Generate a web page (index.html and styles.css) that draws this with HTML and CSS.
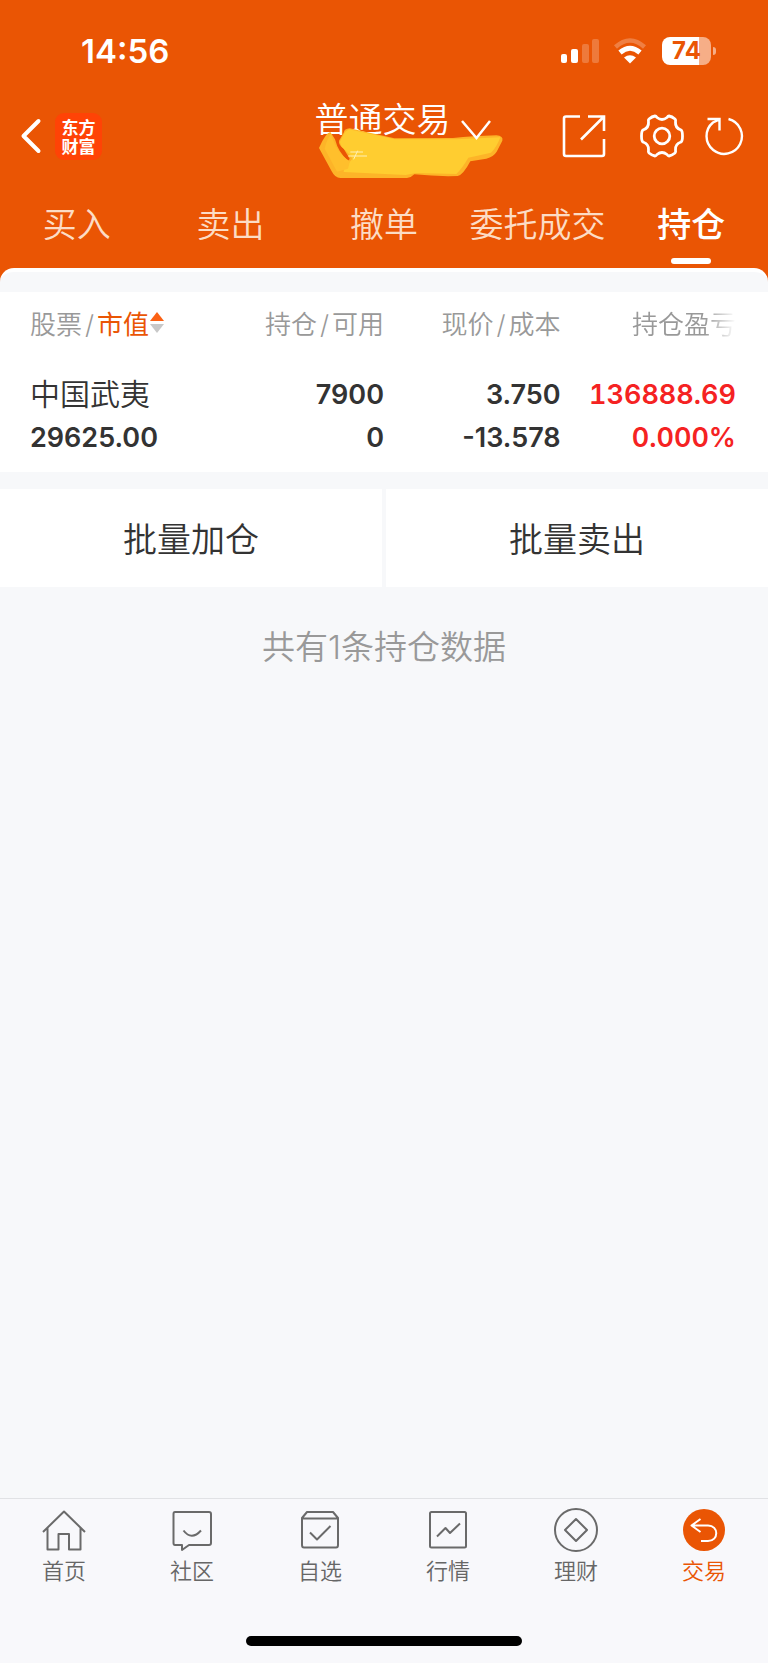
FILE: index.html
```html
<!DOCTYPE html>
<html lang="zh-CN">
<head>
<meta charset="utf-8">
<meta name="viewport" content="width=device-width, initial-scale=1">
<title>普通交易 - 持仓</title>
<link rel="stylesheet" href="styles.css">
</head>
<body>
<div class="app">
  <header class="top">
    <div class="status">
      <time class="clock">14:56</time>
      <div class="status-icons">
        <svg class="signal" width="38" height="26" viewBox="0 0 38 26" fill="#fff" aria-hidden="true">
          <rect x="0" y="16" width="6" height="9" rx="2"/>
          <rect x="10" y="11" width="7" height="14" rx="2"/>
          <rect x="21" y="6" width="7" height="19" rx="2" opacity=".22"/>
          <rect x="31" y="1" width="7" height="24" rx="2" opacity=".22"/>
        </svg>
        <svg class="wifi" width="34" height="26" viewBox="0 0 34 26" aria-hidden="true">
          <path d="M2.500 9Q17-4 31.500 9" fill="none" stroke="#fff" stroke-width="4.500" opacity=".25"/>
          <path d="M7 14.500Q17 6 27 14.500" fill="none" stroke="#fff" stroke-width="5"/>
          <path d="M11 19.500Q17 15 23 19.500L17 25.500Z" fill="#fff"/>
        </svg>
        <div class="battery"><span class="battery-level">74</span></div>
      </div>
    </div>
    <nav class="nav" aria-label="页面导航">
      <div class="nav-left">
        <button class="icon-btn" aria-label="返回">
          <svg width="20" height="36" viewBox="0 0 20 36" fill="none" stroke="#fff" stroke-width="4" stroke-linecap="round" stroke-linejoin="round"><path d="M17.500 3L2.500 18L17.500 33"/></svg>
        </button>
        <a class="logo" href="#">东方<br>财富</a>
      </div>
      <button class="title">
        <span>普通交易</span>
        <svg class="scribble" width="184" height="50" viewBox="58 146 552 150" aria-hidden="true">
          <path d="M92 158Q78 160 58 206L96 276Q106 296 122 296H322Q336 294 344 285Q410 292 474 290Q490 288 512 246L560 238Q582 232 591 217L608 184Q612 170 590 168Q520 170 460 176L284 177L150 147Q134 148 132 160L118 184Q116 196 132 208L150 238L146 245Q116 220 106 180Z" fill="#fdb428"/>
          <path d="M148 150L286 180L470 180L602 174Q590 206 574 220L506 235Q488 266 470 284L350 281L318 287L132 278Q132 266 152 246L158 238L150 226L126 202L120 188L136 158Z" fill="#ffcd30"/>
          <path d="M94 163Q78 188 75 208L112 277L145 268L151 246Q112 224 94 163Z" fill="#ffbf2c"/>
          <path d="M152 218H190M146 230H202M174 214L162 240" stroke="#fff0b5" stroke-width="3"/>
        </svg>
        <svg class="chevron" width="30" height="20" viewBox="0 0 30 20" fill="none" stroke="#fff" stroke-width="2.500"><path d="M1 1L15.500 18L29 1"/></svg>
      </button>
      <div class="nav-right">
        <button class="icon-btn" aria-label="分享">
          <svg width="44" height="44" viewBox="0 0 44 44" fill="none" stroke="#fff" stroke-width="2.600"><path d="M18 2.500H4Q2 2.500 2 4.500V40Q2 42 4 42H40Q42 42 42 40V25M26 2.500H42V17M41 3.500L19 25.500"/></svg>
        </button>
        <button class="icon-btn gear" aria-label="设置">
          <svg width="44" height="44" viewBox="0 0 44 44" fill="none" stroke="#fff" stroke-width="2.800" stroke-linejoin="round"><path d="M15 2Q16 2 17 3.500Q22 7.500 27 3.500Q28 2 29 2Q32 2.500 35 5Q36 6 35.500 8Q35 14 41 16Q42.500 17 42.500 22Q42.500 27 41 28Q35 30 35.500 36Q36 38 35 39Q32 41.500 29 42Q28 42 27 40.500Q22 36.500 17 40.500Q16 42 15 42Q12 41.500 9 39Q8 38 8.500 36Q9 30 3 28Q1.500 27 1.500 22Q1.500 17 3 16Q9 14 8.500 8Q8 6 9 5Q12 2.500 15 2Z"/><circle cx="22" cy="22" r="7.800"/></svg>
        </button>
        <button class="icon-btn" aria-label="刷新">
          <svg width="40" height="40" viewBox="0 0 40 40" fill="none" stroke="#fff" stroke-width="2.400"><path d="M24.500 3A17.700 17.700 0 1 1 9 6.500L15.500 3.500M3.500 3H15.500V14.500"/></svg>
        </button>
      </div>
    </nav>
    <nav class="tabs" aria-label="交易">
      <a class="tab" href="#">买入</a>
      <a class="tab" href="#">卖出</a>
      <a class="tab" href="#">撤单</a>
      <a class="tab" href="#">委托成交</a>
      <a class="tab tab-active" href="#" aria-current="page">持仓</a>
    </nav>
  </header>

  <main class="sheet">
    <table class="holdings">
      <thead>
        <tr>
          <th scope="col">股票<i>/</i><button class="sort">市值<svg width="14" height="22" viewBox="0 0 14 22" aria-hidden="true"><path d="M7 1L14 10H0Z" fill="#fb6114"/><path d="M0 13H14L7 22Z" fill="#c8c8c8"/></svg></button></th>
          <th scope="col">持仓<i>/</i>可用</th>
          <th scope="col">现价<i>/</i>成本</th>
          <th scope="col"><span class="faded">持仓盈亏</span></th>
        </tr>
      </thead>
      <tbody>
        <tr>
          <td><span class="name">中国武夷</span><span>29625.00</span></td>
          <td><span>7900</span><span>0</span></td>
          <td><span>3.750</span><span>-13.578</span></td>
          <td class="gain"><span>136888.69</span><span>0.000%</span></td>
        </tr>
      </tbody>
    </table>
    <div class="actions">
      <button class="action">批量加仓</button>
      <button class="action">批量卖出</button>
    </div>
    <p class="summary">共有1条持仓数据</p>
  </main>

  <footer class="dock">
    <nav class="dock-nav" aria-label="主导航">
      <a class="dock-item" href="#">
        <svg width="44" height="44" viewBox="0 0 44 44"><path d="M1 23L22 2.500L43 23M5.500 19V40.500H16.500V25H27V40.500H38.500V19"/></svg>首页</a>
      <a class="dock-item" href="#">
        <svg width="44" height="44" viewBox="0 0 44 44"><path d="M5 3H39Q41 3 41 5V34Q41 36 39 36H19L12 41V36H5Q3.500 36 3.500 34V5Q3.500 3 5 3ZM13.500 21.500Q21.500 32 31 21.500"/></svg>社区</a>
      <a class="dock-item" href="#">
        <svg width="44" height="44" viewBox="0 0 44 44"><path d="M4 9L9 3H35L40 9V36Q40 38.500 38 38.500H6Q4 38.500 4 36ZM4 9.500H40M12 23.500L19 30.500L32.500 17"/></svg>自选</a>
      <a class="dock-item" href="#">
        <svg width="44" height="44" viewBox="0 0 44 44"><rect x="4" y="3" width="36" height="35.500" rx="1.500"/><path d="M11 27.500L19.500 19L24 24L34 14.500"/></svg>行情</a>
      <a class="dock-item" href="#">
        <svg width="44" height="44" viewBox="0 0 44 44"><circle cx="22" cy="21" r="21"/><path d="M22 10L33 21L22 32L11 21Z"/></svg>理财</a>
      <a class="dock-item dock-active" href="#" aria-current="page">
        <svg width="44" height="44" viewBox="0 0 44 44"><circle cx="22" cy="21" r="21" fill="#ea5504" stroke="none"/><path d="M18.500 10L9.500 16.500L18.500 23M10 16.500H26C37 16.500 37 32 26 32H19" stroke="#fff"/></svg>交易</a>
    </nav>
    <div class="home-bar"></div>
  </footer>
</div>
</body>
</html>
```
FILE: styles.css
```css
* { box-sizing: border-box; }

body {
  margin: 0;
  background: #f7f8fa;
  color: #333;
  font-family: Inter, "Noto Sans CJK SC", sans-serif;
  font-weight: 350;
}

button {
  border: 0;
  padding: 0;
  background: none;
  color: inherit;
  font: inherit;
}

a { color: inherit; text-decoration: none; }
svg { display: block; flex: none; overflow: visible; }

.app {
  display: flex;
  flex-direction: column;
  min-height: 100vh;
}

.top {
  background: #ea5504;
  color: #fff;
  padding-bottom: 16px;
  margin-bottom: -16px;
}

.status {
  display: flex;
  justify-content: space-between;
  align-items: center;
  height: 100px;
  padding: 2px 57px 0 81px;
}

.clock { font-size: 33px; font-weight: 600; }

.status-icons { display: flex; align-items: center; }
.wifi { margin: 0 15px 0 14px; }

.battery {
  position: relative;
  width: 49px;
  height: 28px;
  border-radius: 8px;
  background: linear-gradient(90deg, #fff 75%, #f6ae87 75%);
  color: #ea5504;
  font-size: 24px;
  font-weight: 700;
  line-height: 28px;
  text-align: center;
}

.battery::after {
  content: "";
  position: absolute;
  right: -5px;
  top: 10px;
  width: 3px;
  height: 8px;
  border-radius: 0 4px 4px 0;
  background: #f6ae87;
}

.nav { display: flex; height: 72px; }

.nav-left,
.nav-right {
  flex: 1;
  display: flex;
  align-items: center;
}

.nav-left { gap: 14px; padding-left: 21px; }
.nav-right { justify-content: flex-end; padding-right: 24px; }
.gear { margin: 0 20px 0 34px; }

.logo {
  height: 47px;
  width: 47px;
  padding-top: 4px;
  border-radius: 9px;
  background: #ff4306;
  font-family: "Noto Sans CJK SC", sans-serif;
  font-size: 17px;
  font-weight: 700;
  line-height: 19px;
  text-align: center;
}

.title {
  position: relative;
  display: flex;
  align-items: flex-end;
  align-self: flex-start;
  gap: 10px;
  padding-left: 40px;
  font-size: 34px;
  line-height: 40px;
}

.scribble {
  position: absolute;
  left: 44px;
  top: 28px;
}

.chevron { position: relative; }

.tabs {
  display: grid;
  grid-template-columns: repeat(5, 1fr);
  height: 96px;
}

.tab {
  display: flex;
  flex-direction: column;
  align-items: center;
  padding-top: 33px;
  color: #fcdcc5;
  font-size: 34px;
  line-height: 40px;
  white-space: nowrap;
}

.tab-active { color: #fff; font-weight: 500; }

.tab-active::after {
  content: "";
  width: 40px;
  height: 6px;
  margin-top: 13px;
  border-radius: 3px;
  background: #fff;
}

.sheet {
  flex: 1;
  border-top: 4px solid #fff;
  border-radius: 14px 14px 0 0;
  background: #f7f8fa;
  padding-top: 20px;
}

.holdings {
  width: 100%;
  table-layout: fixed;
  border-collapse: collapse;
  background: #fff;
}

.holdings th,
.holdings td {
  width: 23%;
  padding: 0;
  text-align: right;
  white-space: nowrap;
}

.holdings th:first-child,
.holdings td:first-child {
  width: 27%;
  padding-left: 30px;
  text-align: left;
}

.holdings th:last-child,
.holdings td:last-child { width: 27%; padding-right: 32px; }

.holdings th {
  height: 64px;
  padding-bottom: 4px;
  color: #999;
  font-size: 26px;
  font-weight: 350;
}

.holdings i { padding: 0 3px; font-style: normal; }

.sort {
  display: inline-flex;
  align-items: center;
  gap: 1px;
  color: #ea5504;
  font-weight: 400;
}

.faded {
  display: inline-block;
  -webkit-mask-image: linear-gradient(90deg, #000 70%, transparent);
  mask-image: linear-gradient(90deg, #000 70%, transparent);
}

.holdings td {
  padding-top: 17px;
  padding-bottom: 13px;
  font-size: 27px;
  font-weight: 600;
  line-height: 43px;
}

.holdings td span { display: block; }
.holdings .name { font-size: 30px; font-weight: 350; }

.holdings .gain {
  color: #f52222;
  font-variant-numeric: tabular-nums;
}

.actions {
  display: grid;
  grid-template-columns: 1fr 1fr;
  gap: 4px;
  margin-top: 17px;
}

.action {
  height: 98px;
  padding-bottom: 2px;
  background: #fff;
  font-size: 34px;
}

.summary {
  margin: 40px 0;
  color: #999;
  font-size: 33px;
  line-height: 40px;
  text-align: center;
}

.dock {
  border-top: 1px solid #e1e2e5;
  background: #f8f8fb;
  padding-bottom: 17px;
}

.dock-nav {
  display: grid;
  grid-template-columns: repeat(6, 1fr);
}

.dock-item {
  display: flex;
  flex-direction: column;
  align-items: center;
  gap: 3px;
  padding-top: 10px;
  color: #666;
  font-size: 22px;
  line-height: 30px;
}

.dock-item svg {
  fill: none;
  stroke: #6a6a6a;
  stroke-width: 2;
  stroke-linejoin: round;
}

.dock-active { color: #ea5504; }

.home-bar {
  width: 36%;
  height: 10px;
  margin: 50px auto 0;
  border-radius: 5px;
  background: #000;
}
```
